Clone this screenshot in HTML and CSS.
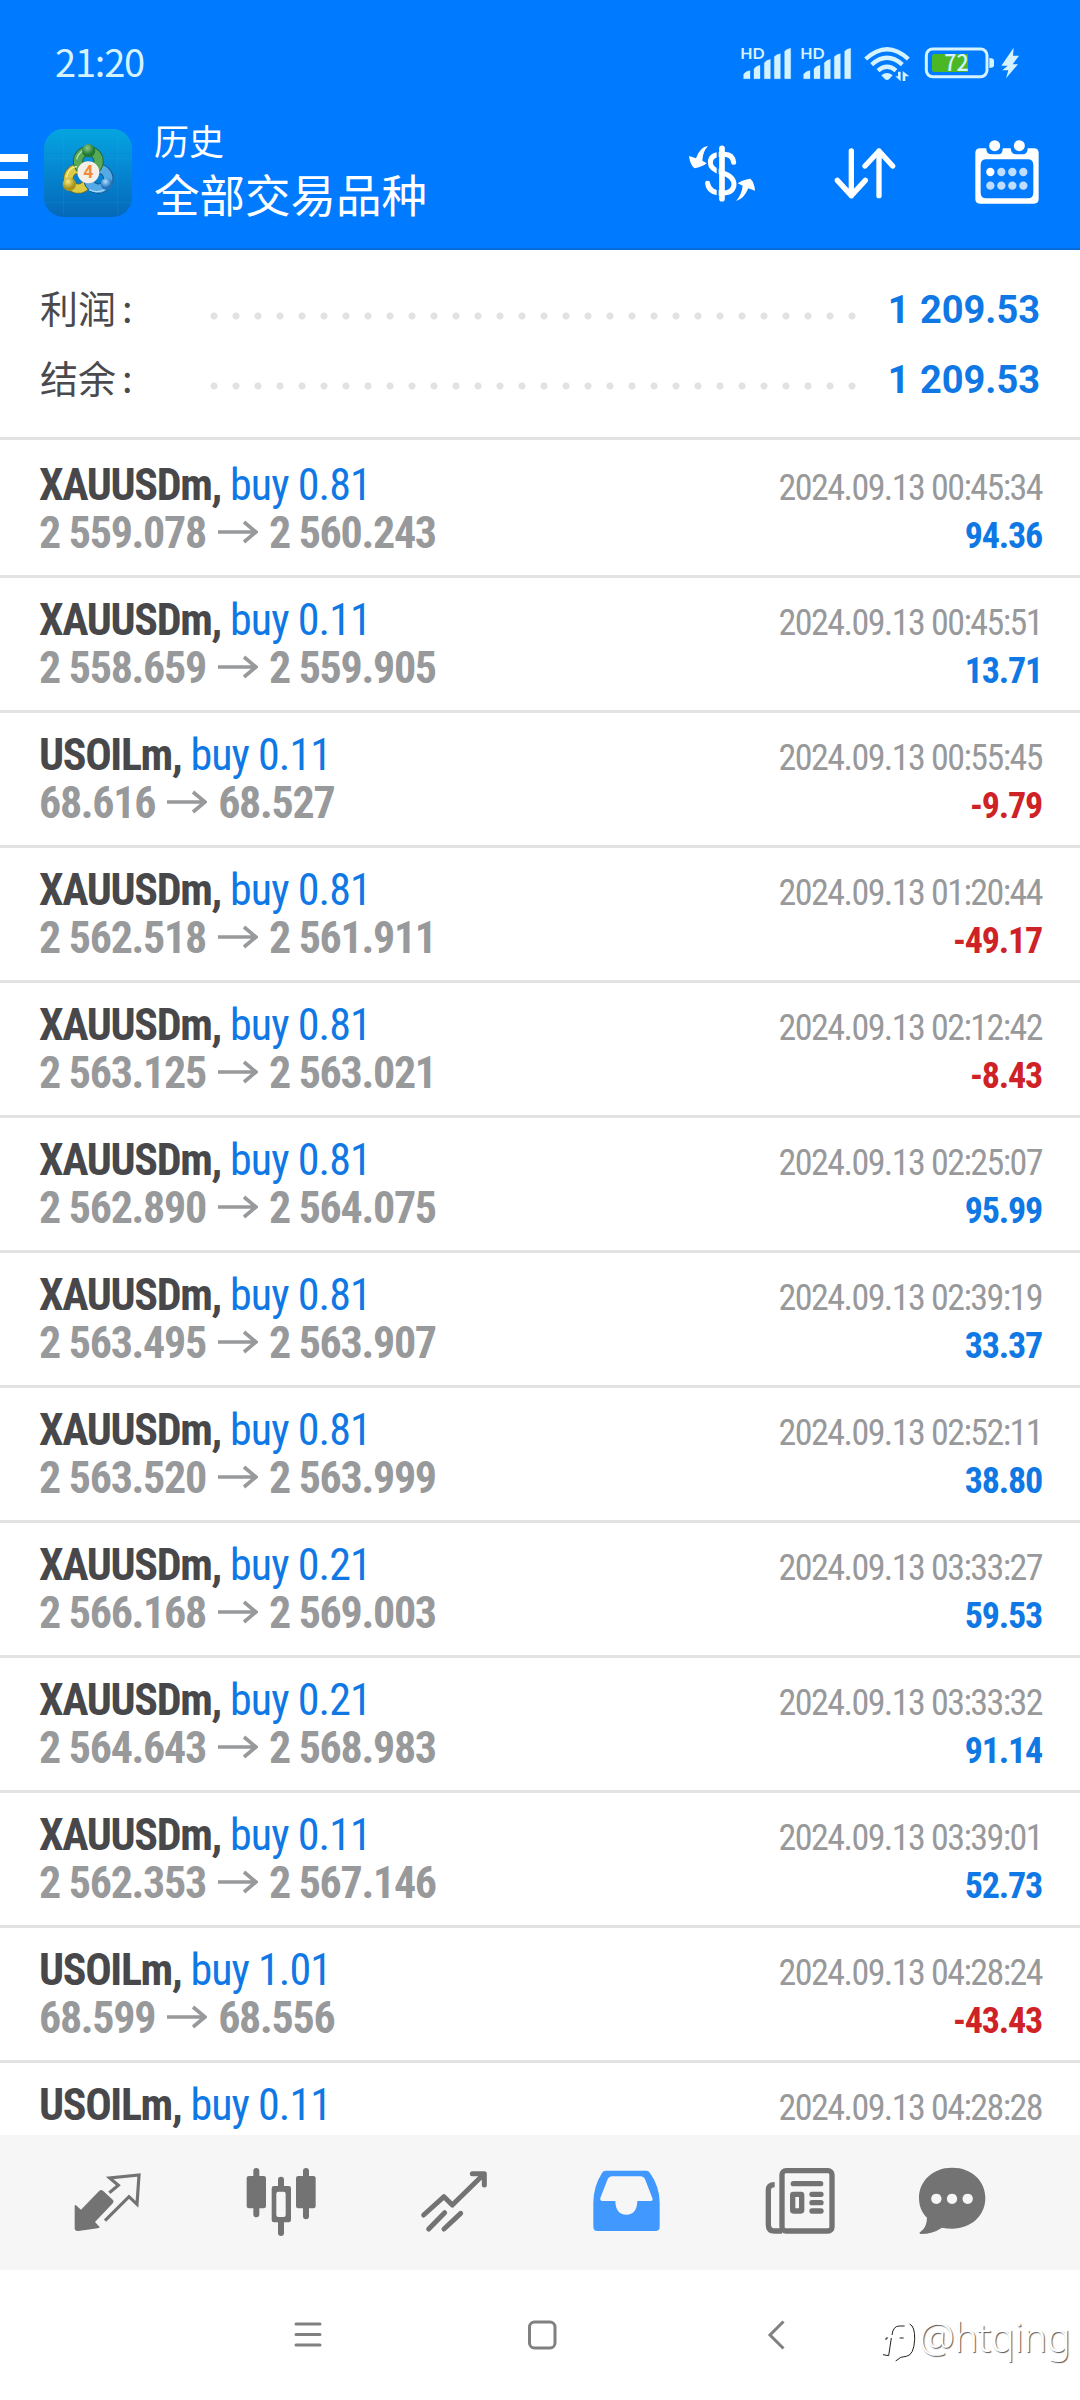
FILE: index.html
```html
<!DOCTYPE html>
<html lang="zh-CN">
<head>
<meta charset="utf-8">
<title>历史</title>
<link rel="stylesheet" href="styles.css">
</head>
<body>
<svg class="defs" aria-hidden="true">
  <symbol id="arrow" viewBox="0 0 40 24"><path d="M0 12H37M26 2L38 12L26 22" fill="none" stroke="#98999b" stroke-width="3.600"/></symbol>
  <symbol id="signal" viewBox="0 0 156 140">
    <path d="M11 116V103Q18 92 30 92V116Z M42 116V86Q48 78 60 76V116Z M73 116V68Q79 60 91 58V116Z M103 116V50Q109 43 121 41V116Z M134 116V34Q140 27 152 25V116Z" stroke="currentColor" stroke-width="1"/>
  </symbol>
</svg>
<div class="screen">
  <header class="header">
    <div class="statusbar">
      <span class="time">21:20</span>
      <svg class="status-icons" viewBox="300 120 840 140" fill="currentColor">
        <use href="#signal" x="300" y="120" width="156" height="140"/>
        <text x="301" y="177" font-family="Lato" font-weight="700" font-size="47" textLength="73" lengthAdjust="spacingAndGlyphs">HD</text>
        <use href="#signal" x="480" y="120" width="156" height="140"/>
        <text x="481" y="177" font-family="Lato" font-weight="700" font-size="47" textLength="73" lengthAdjust="spacingAndGlyphs">HD</text>
        <g fill="none" stroke="currentColor" stroke-width="13">
          <path d="M677 177Q741 118 805 177"/>
          <path d="M695 194Q741 153 787 194"/>
          <path d="M714 212Q741 189 768 212"/>
        </g>
        <path d="M724 226Q741 212 758 226L747 238Q741 242 735 238Z"/>
        <path d="M774 215h8v29l-16 -15h8z M788 243V213l20 16h-12v14z"/>
        <rect x="859" y="147" width="182" height="83" rx="19" fill="none" stroke="currentColor" stroke-width="9"/>
        <path d="M883 162H984V216H883Q876 216 876 209V169Q876 162 883 162Z" fill="#4cb725"/>
        <path d="M1048 174Q1062 174 1062 182V196Q1062 204 1048 204Z"/>
        <text x="913" y="214" font-family="Noto Sans CJK SC" font-weight="500" font-size="68" textLength="73" lengthAdjust="spacingAndGlyphs">72</text>
        <path d="M1121 143L1084 197H1103L1087 211H1105L1098 235L1134 193H1118L1137 167H1119Z"/>
      </svg>
    </div>
    <div class="toolbar">
      <div class="menu"><i></i><i></i><i></i></div>
      <svg class="app-icon" viewBox="42 57 264 264">
        <defs>
          <linearGradient id="bg" x1="0" y1="0" x2="0" y2="1"><stop offset="0" stop-color="#05a5e0"/><stop offset=".5" stop-color="#0585d0"/><stop offset="1" stop-color="#0568b8"/></linearGradient>
          <radialGradient id="gr" cx=".4" cy=".3"><stop offset="0" stop-color="#8fc98a"/><stop offset="1" stop-color="#207a34"/></radialGradient>
          <radialGradient id="ye" cx=".4" cy=".3"><stop offset="0" stop-color="#f8ea80"/><stop offset="1" stop-color="#a8941c"/></radialGradient>
          <radialGradient id="bl" cx=".4" cy=".3"><stop offset="0" stop-color="#b0e0fb"/><stop offset="1" stop-color="#2274bd"/></radialGradient>
        </defs>
        <rect x="42" y="57" width="264" height="264" rx="58" fill="url(#bg)"/>
        <path d="M42 145H306M42 277H306M100 65V315M263 65V315" stroke="#39a9e4" stroke-width="1.500" opacity=".35"/>
        <g fill="none">
          <circle cx="145" cy="206" r="30" stroke="#756d22" stroke-width="30"/>
          <circle cx="145" cy="206" r="30" stroke="#dccb45" stroke-width="25"/>
          <circle cx="205" cy="206" r="30" stroke="#155389" stroke-width="30"/>
          <circle cx="205" cy="206" r="30" stroke="#55a9e4" stroke-width="25"/>
          <circle cx="175" cy="154" r="31" stroke="#245e2a" stroke-width="30"/>
          <circle cx="175" cy="154" r="31" stroke="#58a957" stroke-width="25"/>
          <path d="M140 148Q147 120 175 117" stroke="#b9dfb1" stroke-width="4"/>
          <path d="M109 202Q116 171 141 170" stroke="#f7ef9b" stroke-width="4"/>
          <path d="M177 239Q207 253 231 233" stroke="#a6dcfa" stroke-width="4"/>
        </g>
        <circle cx="176" cy="122" r="20" fill="url(#gr)"/>
        <circle cx="118" cy="223" r="20" fill="url(#ye)"/>
        <circle cx="230" cy="222" r="18" fill="url(#bl)"/>
        <circle cx="175" cy="187" r="33" fill="#f4eee9"/>
        <text x="175" y="205" text-anchor="middle" font-family="Roboto" font-weight="700" font-size="53" fill="#f08a3c">4</text>
      </svg>
      <div class="titles">
        <span class="subtitle">历史</span>
        <h1 class="title">全部交易品种</h1>
      </div>
      <div class="actions">
        <svg viewBox="126 395 240 240" fill="currentColor">
          <path d="M281 486Q277 458 246 462Q211 462 211 487Q211 506 246 517Q282 528 282 553Q280 579 246 578Q207 578 203 549" fill="none" stroke="currentColor" stroke-width="15" stroke-linecap="round"/>
          <path d="M233 450V590" stroke="#007aff" stroke-width="6"/>
          <path d="M246 444V595" stroke="currentColor" stroke-width="17" stroke-linecap="round"/>
          <path d="M204 437Q180 439 168 474L147 467Q150 493 163 504Q187 500 200 489L187 481Q188 453 204 437Z"/>
          <path d="M288 602Q312 596 325 564L345 571Q343 545 331 535Q307 538 293 549L308 556Q305 583 288 602Z"/>
        </svg>
        <svg viewBox="555 395 240 240" fill="none" stroke="currentColor" stroke-width="16" stroke-linecap="round" stroke-linejoin="round">
          <path d="M634 452V586M592 540L634 586L676 540M717 586V452M675 497L717 452L758 497"/>
        </svg>
        <svg viewBox="980 395 240 240" fill="currentColor">
          <path fill-rule="evenodd" d="M1019 444H1038Q1037 462 1054 462H1074Q1088 462 1087 444H1111Q1112 462 1128 462H1147Q1162 462 1162 444H1181Q1195 444 1195 458V596Q1195 610 1181 610H1019Q1005 610 1005 596V458Q1005 444 1019 444ZM1038 477Q1021 477 1021 494V577Q1021 594 1038 594H1162Q1179 594 1179 577V494Q1179 477 1162 477Z"/>
          <circle cx="1063" cy="436" r="16.500"/><circle cx="1137" cy="436" r="16.500"/>
          <circle cx="1050" cy="515" r="12.500"/>
          <g opacity=".75"><circle cx="1083" cy="515" r="12.500"/><circle cx="1116" cy="515" r="12.500"/><circle cx="1149" cy="515" r="12.500"/><circle cx="1050" cy="556" r="12.500"/><circle cx="1083" cy="556" r="12.500"/><circle cx="1116" cy="556" r="12.500"/><circle cx="1149" cy="556" r="12.500"/></g>
        </svg>
      </div>
    </div>
  </header>

  <section class="summary">
    <div class="total"><span class="label">利润<span class="colon">:</span></span><span class="dots"></span><b>1 209.53</b></div>
    <div class="total"><span class="label">结余<span class="colon">:</span></span><span class="dots"></span><b>1 209.53</b></div>
  </section>

  <main class="deals">
    <article class="deal">
      <div class="line"><span class="name"><b>XAUUSDm,</b> buy 0.81</span><time>2024.09.13 00:45:34</time></div>
      <div class="line"><span class="price">2 559.078<svg><use href="#arrow"/></svg>2 560.243</span><b class="profit">94.36</b></div>
    </article>
    <article class="deal">
      <div class="line"><span class="name"><b>XAUUSDm,</b> buy 0.11</span><time>2024.09.13 00:45:51</time></div>
      <div class="line"><span class="price">2 558.659<svg><use href="#arrow"/></svg>2 559.905</span><b class="profit">13.71</b></div>
    </article>
    <article class="deal">
      <div class="line"><span class="name"><b>USOILm,</b> buy 0.11</span><time>2024.09.13 00:55:45</time></div>
      <div class="line"><span class="price">68.616<svg><use href="#arrow"/></svg>68.527</span><b class="profit loss">-9.79</b></div>
    </article>
    <article class="deal">
      <div class="line"><span class="name"><b>XAUUSDm,</b> buy 0.81</span><time>2024.09.13 01:20:44</time></div>
      <div class="line"><span class="price">2 562.518<svg><use href="#arrow"/></svg>2 561.911</span><b class="profit loss">-49.17</b></div>
    </article>
    <article class="deal">
      <div class="line"><span class="name"><b>XAUUSDm,</b> buy 0.81</span><time>2024.09.13 02:12:42</time></div>
      <div class="line"><span class="price">2 563.125<svg><use href="#arrow"/></svg>2 563.021</span><b class="profit loss">-8.43</b></div>
    </article>
    <article class="deal">
      <div class="line"><span class="name"><b>XAUUSDm,</b> buy 0.81</span><time>2024.09.13 02:25:07</time></div>
      <div class="line"><span class="price">2 562.890<svg><use href="#arrow"/></svg>2 564.075</span><b class="profit">95.99</b></div>
    </article>
    <article class="deal">
      <div class="line"><span class="name"><b>XAUUSDm,</b> buy 0.81</span><time>2024.09.13 02:39:19</time></div>
      <div class="line"><span class="price">2 563.495<svg><use href="#arrow"/></svg>2 563.907</span><b class="profit">33.37</b></div>
    </article>
    <article class="deal">
      <div class="line"><span class="name"><b>XAUUSDm,</b> buy 0.81</span><time>2024.09.13 02:52:11</time></div>
      <div class="line"><span class="price">2 563.520<svg><use href="#arrow"/></svg>2 563.999</span><b class="profit">38.80</b></div>
    </article>
    <article class="deal">
      <div class="line"><span class="name"><b>XAUUSDm,</b> buy 0.21</span><time>2024.09.13 03:33:27</time></div>
      <div class="line"><span class="price">2 566.168<svg><use href="#arrow"/></svg>2 569.003</span><b class="profit">59.53</b></div>
    </article>
    <article class="deal">
      <div class="line"><span class="name"><b>XAUUSDm,</b> buy 0.21</span><time>2024.09.13 03:33:32</time></div>
      <div class="line"><span class="price">2 564.643<svg><use href="#arrow"/></svg>2 568.983</span><b class="profit">91.14</b></div>
    </article>
    <article class="deal">
      <div class="line"><span class="name"><b>XAUUSDm,</b> buy 0.11</span><time>2024.09.13 03:39:01</time></div>
      <div class="line"><span class="price">2 562.353<svg><use href="#arrow"/></svg>2 567.146</span><b class="profit">52.73</b></div>
    </article>
    <article class="deal">
      <div class="line"><span class="name"><b>USOILm,</b> buy 1.01</span><time>2024.09.13 04:28:24</time></div>
      <div class="line"><span class="price">68.599<svg><use href="#arrow"/></svg>68.556</span><b class="profit loss">-43.43</b></div>
    </article>
    <article class="deal">
      <div class="line"><span class="name"><b>USOILm,</b> buy 0.11</span><time>2024.09.13 04:28:28</time></div>
    </article>
  </main>

  <nav class="tabs">
    <svg viewBox="27 0 240 300" fill="currentColor">
      <path d="M50 165L66 179L121 122Q127 118 132 122L162 150Q165 155 162 159L108 216L122 231Q122 234 116 235L58 243Q47 244 47 234V169Q47 164 50 165Z"/>
      <path d="M151 128L178 106L152 84L240 75L234 163L210 140L138 212" fill="none" stroke="currentColor" stroke-width="9.500"/>
    </svg>
    <svg viewBox="543 0 240 300" fill="currentColor">
      <path d="M589 63V193M663 89V115M663 212V249M738 63V199" stroke="currentColor" stroke-width="18" stroke-linecap="round"/>
      <rect x="560" y="78" width="58" height="97" rx="7"/>
      <rect x="708" y="78" width="59" height="97" rx="7"/>
      <path fill-rule="evenodd" d="M642 108H686Q693 108 693 115V210Q693 217 686 217H642Q635 217 635 210V115Q635 108 642 108ZM655 125Q649 125 649 131V195Q649 201 655 201H671Q677 201 677 195V131Q677 125 671 125Z"/>
    </svg>
    <svg viewBox="42 0 240 300" fill="none" stroke="currentColor" stroke-width="15" stroke-linecap="round" stroke-linejoin="round">
      <path d="M71 195L132 140L157 165L249 75M217 71H253V105M86 237L134 188M132 237L182 190"/>
      <path d="M228 71H253V96Z" fill="currentColor" stroke="none"/>
    </svg>
    <svg class="active" viewBox="564 0 240 300" fill="currentColor">
      <path fill-rule="evenodd" d="M620 62H742Q749 62 753 69Q782 110 782 158V230Q782 243 769 243H595Q583 243 583 230V158Q583 110 609 69Q613 62 620 62ZM640 79Q629 79 625 90L604 144Q602 153 611 153H649Q650 194 682 194Q714 194 715 153H755Q763 153 760 144L739 90Q735 79 724 79Z"/>
    </svg>
    <svg viewBox="63 0 240 300" fill="none" stroke="currentColor" stroke-width="16" stroke-linecap="round">
      <rect x="129" y="62" width="150" height="181" rx="12"/>
      <path d="M129 243H107Q88 243 88 224V121Q88 104 107 104" stroke-linecap="butt"/>
      <path d="M163 101H245M219 133H246M219 158H246M219 183H246"/>
      <rect x="161" y="133" width="27" height="50" rx="2"/>
    </svg>
    <svg viewBox="519 0 240 300" fill="currentColor">
      <path fill-rule="evenodd" d="M639 53C700 53 739 94 739 144C739 197 696 236 640 236Q624 236 609 233Q581 252 545 252Q538 250 544 246Q564 232 564 203C548 188 540 167 540 144C540 94 580 53 639 53ZM592 131a15.500 15.500 0 1 0 .1 0ZM639 131a15.500 15.500 0 1 0 .1 0ZM686 131a15.500 15.500 0 1 0 .1 0Z"/>
    </svg>
  </nav>

  <footer class="system-nav">
    <svg viewBox="0 0 30 30" stroke-linecap="round"><path d="M3 4H27M3 14.500H27M3 25H27"/></svg>
    <svg viewBox="0 0 30 30"><rect x="2.500" y="2" width="25.500" height="26" rx="5"/></svg>
    <svg viewBox="0 0 30 30"><path d="M22.500 1.500L9 15L22.500 28.500"/></svg>
  </footer>

  <div class="watermark">
    <svg viewBox="0 0 114 150"><path d="M33 128L50 131L58 78M42 84V78H48M60 69Q63 42 82 42H98M113 36Q129 43 128 82Q126 129 103 133Q86 132 71 147M83 78H95" fill="none" stroke="#111" stroke-width="2.800"/></svg>
    <span>@htqing</span>
  </div>
</div>
</body>
</html>
```
FILE: styles.css
```css
* { box-sizing: border-box; }
body {
  margin: 0;
  background: #fff;
  font-family: Roboto, "Noto Sans CJK SC", sans-serif;
}
svg { display: block; }
.defs { position: absolute; width: 0; height: 0; }
.screen {
  position: relative;
  display: flex;
  flex-direction: column;
  width: 1080px;
  height: 2400px;
  overflow: hidden;
}

.header {
  flex: none;
  height: 250px;
  background: #007aff;
  border-bottom: 2px solid #0a6cdb;
  color: #fff;
}
.statusbar {
  display: flex;
  justify-content: space-between;
  height: 124px;
  padding: 40px 60px 0 55px;
  color: #d4f3ff;
}
.time {
  font: 38px/42px "Noto Sans CJK SC", sans-serif;
  letter-spacing: -1.2px;
}
.status-icons { width: 280px; height: 46.7px; }
.toolbar { display: flex; height: 124px; }
.menu {
  display: flex;
  flex-direction: column;
  gap: 9.5px;
  width: 44px;
  padding-top: 30px;
}
.menu i { width: 27.500px; height: 7.500px; background: #fff; }
.app-icon { width: 88px; height: 88px; margin-top: 5px; }
.titles {
  flex: 1;
  padding-left: 22px;
  font-family: "Noto Sans CJK SC", sans-serif;
}
.subtitle { display: block; font-size: 35px; line-height: 32px; }
.title { margin: 9px 0 0; font-size: 45.5px; font-weight: 400; line-height: 56px; }
.actions {
  display: flex;
  gap: 62.500px;
  padding: 8px 33px 0 0;
}
.actions svg { width: 80px; height: 80px; }

.summary {
  flex: none;
  height: 190px;
  padding: 22px 40px 0;
  border-bottom: 3px solid #e3e3e4;
}
.total { display: flex; align-items: baseline; height: 70px; line-height: 70px; }
.total b { margin-left: auto; font-size: 38px; word-spacing: 1px; color: #0f78e4; }
.label {
  width: 162.500px;
  font-family: "Noto Sans CJK SC", sans-serif;
  font-size: 38px;
  color: #4a4a4c;
}
.colon { margin-left: 6px; }
.dots {
  align-self: flex-start;
  width: 660px;
  height: 70px;
  margin-top: 9px;
  background: radial-gradient(circle, #e2e2e3 3.200px, transparent 3.900px) 0 50% / 22px 70px;
}

.deals { flex: none; height: 1695px; padding-top: 3px; overflow: hidden; }
.deal {
  height: 135px;
  padding: 18px 38px 0 39px;
  border-bottom: 3px solid #e3e3e4;
  font-family: "Roboto Condensed", Roboto, sans-serif;
  font-size: 44px;
  letter-spacing: -1.200px;
}
.line {
  display: flex;
  justify-content: space-between;
  align-items: baseline;
  height: 48px;
  line-height: 48px;
}
.name { color: #0f78e4; letter-spacing: -.95px; }
.name b { color: #48484a; letter-spacing: -1.35px; }
.price { font-weight: 700; color: #98999b; letter-spacing: -1.3px; }
.price svg {
  display: inline-block;
  width: 40px;
  height: 24px;
  margin: 0 11px 0 12px;
  vertical-align: 4px;
}
.line time, .profit { font-size: 36px; }
.line time { color: #98999b; letter-spacing: -1.55px; }
.profit { color: #0f78e4; }
.profit.loss { color: #cf2226; }

.tabs {
  flex: none;
  display: flex;
  gap: 93px;
  height: 135px;
  padding: 15px 0 0 68px;
  background: #f6f6f6;
  color: #737373;
}
.tabs svg { width: 80px; height: 100px; }
.tabs svg:last-child { margin-left: -21px; }
.tabs .active { color: #4199ff; }

.system-nav {
  display: flex;
  gap: 204px;
  padding: 50px 0 0 292.5px;
}
.system-nav svg { width: 30px; height: 30px; fill: none; stroke: #808082; stroke-width: 3; }

.watermark {
  position: absolute;
  left: 872px;
  top: 2312px;
  display: flex;
  color: #fff;
  font: 300 40px/50px "Noto Sans", sans-serif;
  text-shadow: 1px 1px 1px #555;
}
.watermark svg { width: 38px; height: 50px; margin-right: 9px; overflow: visible; }
.watermark span { letter-spacing: -.4px; }
```
